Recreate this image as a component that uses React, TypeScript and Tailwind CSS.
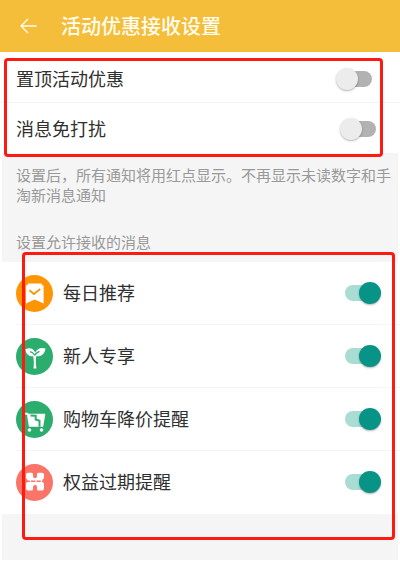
import { useState } from 'react'
import type { ReactNode } from 'react'

interface Canal { id: string; nome: string; icone: ReactNode }

const CANAIS: Canal[] = [
  {
    id: 'daily',
    nome: '每日推荐',
    icone: (
      <>
        <circle cx="18.5" cy="18.5" r="18.5" fill="#ff9405" />
        <path d="M12 8.5h13.500q0 2 2.100 2.200V28.500L18.700 24.500 10 28.500V10.700q2-.2 2-2.200z" fill="#fff" />
        <path d="M13.500 15.200l4.400 3.800 6.300-5" fill="none" stroke="#ff9405" strokeWidth="1.800" />
      </>
    ),
  },
  {
    id: 'new',
    nome: '新人专享',
    icone: (
      <>
        <circle cx="18.5" cy="18.5" r="18.5" fill="#2bad6e" />
        <path d="M9.500 11.200c4-2 8-.8 9.700 3.300 1.800-4 5.800-5.600 10.300-4-.6 5.600-4.500 8.300-9.300 7.700-.6 3.500-.5 8 .3 12.300h-3c.5-4.500.4-8.800-.3-12.200-4.500.2-7.400-2.300-7.700-7.100z" fill="#fff" />
        <path d="M14 13.700c2 .5 3.500 1.600 4.700 3.300 1.400-1.900 2.700-2.900 4.800-3.700" fill="none" stroke="#2bad6e" strokeWidth="1.300" />
      </>
    ),
  },
  {
    id: 'cart',
    nome: '购物车降价提醒',
    icone: (
      <>
        <circle cx="18.5" cy="18.5" r="18.5" fill="#2bad6e" />
        <path d="M9 12.500h2.500l2 12.500h13l2-11.500H12z" fill="#fff" stroke="#fff" strokeWidth="1.500" strokeLinejoin="round" />
        <path d="M14.500 14.500l5.200.3v3.700l3.800 1.200v6" fill="none" stroke="#2bad6e" strokeWidth="2" />
        <circle cx="13.500" cy="29" r="1.800" fill="#fff" />
        <circle cx="25.500" cy="29" r="1.800" fill="#fff" />
      </>
    ),
  },
  {
    id: 'rights',
    nome: '权益过期提醒',
    icone: (
      <>
        <circle cx="18.5" cy="18.5" r="18.5" fill="#fb7468" />
        <path d="M12 8.800h3.500q1.500 0 1.500 1.500v2a2 2 0 0 0 4 0v-2q0-1.500 1.500-1.500H26q2 0 2 2v3.200q-1.600 1.500-1.600 2.700t1.600 2.800v5q0 2-2 2h-3.500q-1.500 0-1.500-1.500v-2a2 2 0 0 0-4 0v2q0 1.500-1.500 1.500H12q-2 0-2-2v-5q1.600-1.600 1.600-2.800T10 14v-3.200q0-2 2-2z" fill="#fff" />
        <path d="M9.500 17.300h19" stroke="#fb7468" strokeWidth="1.500" strokeDasharray="4.300 1.200" />
      </>
    ),
  },
]

function Switch({ id, checked, onChange }: { id: string; checked: boolean; onChange: () => void }) {
  return (
    <input id={id} type="checkbox" role="switch" checked={checked} onChange={onChange}
      className="relative h-4 w-8 shrink-0 cursor-pointer appearance-none rounded-full bg-[#b2b2b2] before:absolute before:-left-1 before:-top-[3px] before:size-[22px] before:rounded-full before:bg-[#ececec] before:shadow-[0_1px_2px_rgba(0,0,0,0.3)] checked:bg-[#a9dcd3] checked:before:left-auto checked:before:-right-1 checked:before:bg-[#079486]" />
  )
}

// moldura vermelha de destaque
function Moldura({ className }: { className: string }) {
  return <div className={`pointer-events-none absolute rounded-sm border-3 border-[#fd1a10] ${className}`} />
}

export default function App() {
  const [ativos, setAtivos] = useState<Record<string, boolean>>({
    top: false, mute: false, daily: true, new: true, cart: true, rights: true,
  })

  const alternar = (id: string) => setAtivos(a => ({ ...a, [id]: !a[id] }))

  return (
    <div className="bg-white pb-[2px] font-['Noto_Sans_CJK_SC',sans-serif] text-[#303030]">
      <header className="flex h-[52px] items-center bg-[#f4bd3a] pl-5 text-[#fffdf0]">
        <button type="button" aria-label="返回" className="mr-6">
          <svg viewBox="0 0 17 16" className="h-4 w-[17px]" fill="none" stroke="currentColor" strokeWidth="1.300">
            <path d="M16.500 8H1M8 1L1 8l7 7" />
          </svg>
        </button>
        <h1 className="text-xl font-medium">活动优惠接收设置</h1>
      </header>

      <section className="relative">
        <div className="flex h-[51px] items-center justify-between border-b border-[#f5f5f5] pl-4 pr-7 pt-1">
          <label htmlFor="top" className="pb-[2px] text-lg">置顶活动优惠</label>
          <Switch id="top" checked={ativos.top} onChange={() => alternar('top')} />
        </div>
        <div className="flex h-[50px] items-center justify-between pl-4 pr-6 pt-[2px]">
          <label htmlFor="mute" className="pb-[2px] text-lg">消息免打扰</label>
          <Switch id="mute" checked={ativos.mute} onChange={() => alternar('mute')} />
        </div>
        <Moldura className="-bottom-1 left-1 right-[17px] top-[6px]" />
      </section>

      <div className="mx-[2px] bg-[#f5f5f5] pb-[10px] pl-[14px] pt-3 text-[15px] leading-5 text-[#999]">
        <p>设置后，所有通知将用红点显示。不再显示未读数字和手淘新消息通知</p>
        <h2 className="mt-[27px]">设置允许接收的消息</h2>
      </div>

      <section className="relative">
        <ul>
          {CANAIS.map(c => (
            <li key={c.id} className="ml-4 flex h-[63px] items-center border-b border-[#f5f5f5] pr-[23px] last:border-transparent">
              <svg viewBox="0 0 37 37" className="mr-[10px] size-[37px] shrink-0">{c.icone}</svg>
              <label htmlFor={c.id} className="flex-1 pb-[2px] text-lg">{c.nome}</label>
              <Switch id={c.id} checked={ativos[c.id]} onChange={() => alternar(c.id)} />
            </li>
          ))}
        </ul>
        <Moldura className="-bottom-[26px] left-[22px] right-[5px] -top-[10px]" />
      </section>

      <div className="mx-[2px] h-[46px] bg-[#f5f5f5]" />
    </div>
  )
}
